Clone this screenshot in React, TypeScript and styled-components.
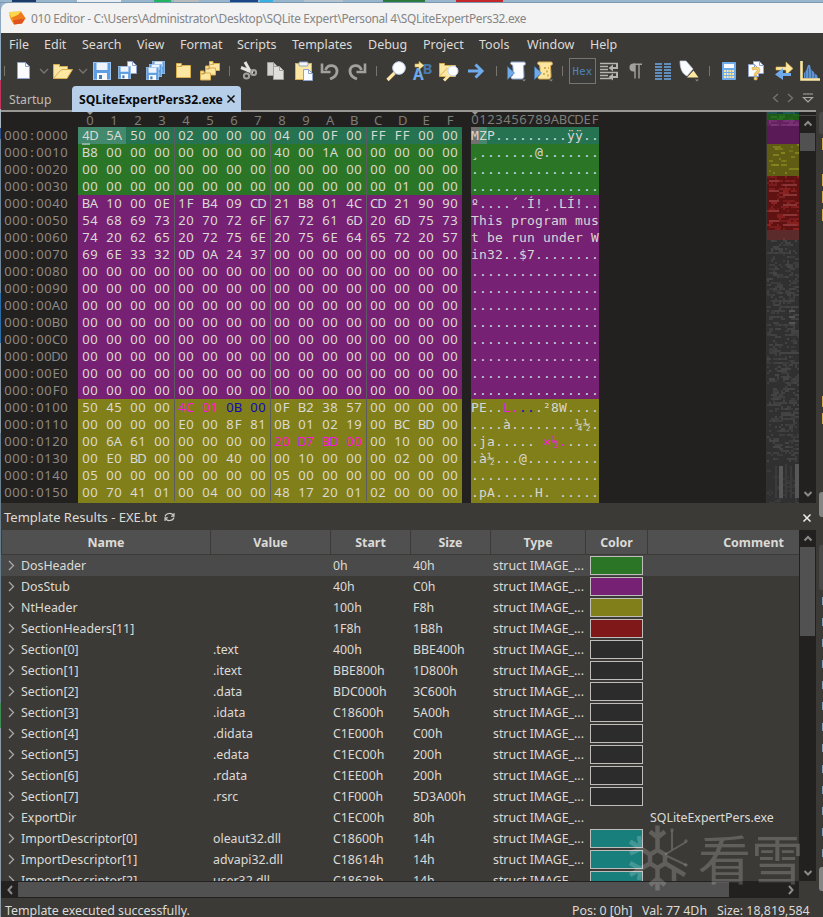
import React from "react";
import styled, { createGlobalStyle } from "styled-components";

const UI = '"Noto Sans", "Noto Sans CJK SC", sans-serif';

const Global = createGlobalStyle`
  * { box-sizing: border-box; }
  body { margin: 0; overflow: hidden; background: #3c3a36; font-family: ${UI}; font-size: 12.5px; color: #dcdad6; }
`;

const Screen = styled.div`
  position: relative; width: 823px; height: 917px; overflow: hidden;
  display: flex; flex-direction: column; background: #3c3a36;
`;
const Desktop = styled.div`
  display: flex; height: 3px; flex: none; background: #97b5cc; border-bottom: 1px solid #7d99ad;
`;
const Blob = styled.i<{ $gap: number; $w: number; $c: string }>`
  height: 2px; margin-left: ${(p) => p.$gap}px; width: ${(p) => p.$w}px; background: ${(p) => p.$c};
`;
const Row = styled.div`display: flex; flex: 1; min-height: 0;`;
const LeftEdge = styled.div`
  width: 1px; flex: none;
  background: linear-gradient(#8ea9bf 0 77px, #c0345c 77px 106px, #a9b6c0 106px 125px, #2d4f86 125px 136px, #6f8799 136px 290px, #2a6da8 290px 340px, #8b9aa5 340px 430px, #68808f 430px 700px, #3f8e50 700px 725px, #8d9aa3 725px);
`;
const Window = styled.div`
  flex: 1; min-width: 0; display: flex; flex-direction: column;
`;
const TitleWrap = styled.div`height: 30px; flex: none; background: #97b5cc;`;
const TitleBar = styled.div`
  display: flex; align-items: center; height: 30px; padding-left: 8px; gap: 5px;
  background: #f3f3f3; border-top-left-radius: 7px; color: #858585; white-space: pre;
  span { font-size: 11.9px; letter-spacing: -0.34px; }
`;
const MenuBar = styled.div`display: flex; align-items: center; height: 24px; flex: none; padding: 0 0 1px 8px;`;
const MenuItem = styled.span<{ $w: number }>`width: ${(p) => p.$w}px; flex: none; white-space: nowrap; color: #dddbd8;`;
const ToolBar = styled.div`display: flex; align-items: center; height: 28px; flex: none;`;
const Slot = styled.div<{ $w: number }>`
  width: ${(p) => p.$w}px; height: 28px; flex: none; display: flex; align-items: center; justify-content: center;
`;
const Sep = styled.i`width: 1px; height: 10px; background: #77756f;`;
const HexToggle = styled.div`
  width: 27px; height: 26px; border: 1px solid #77756f; background: #3a3a38; color: #4f86bd; flex: none;
  font: 10.5px/25px "DejaVu Sans Mono", monospace; text-align: center; letter-spacing: 0.3px;
`;
const TabBar = styled.div`
  display: flex; align-items: stretch; height: 27px; flex: none; width: 815px;
  padding-top: 1px; background: linear-gradient(#999794, #999794) 0 100% / 100% 2px no-repeat;
`;
const Tab = styled.div<{ $active?: boolean }>`
  display: flex; align-items: center; height: 26px; padding-left: ${(p) => (p.$active ? 7 : 8)}px;
  width: ${(p) => (p.$active ? 169 : 71)}px; gap: 4px; white-space: nowrap; font-size: 12.2px;
  color: ${(p) => (p.$active ? "#0a0a0a" : "#bfbdb9")};
  background: ${(p) => (p.$active ? "#b7cfe9" : "transparent")};
  border-radius: 4px 4px 0 0; font-weight: ${(p) => (p.$active ? 700 : 400)};
`;
const TabNav = styled.div`display: flex; align-items: center; margin-left: auto; gap: 8px; padding: 0 2px 2px 0;`;
const Body = styled.div`display: flex; flex: 1; min-height: 0;`;
const Main = styled.div`width: 815px; flex: none; display: flex; flex-direction: column;`;

const HexView = styled.div`display: flex; height: 391px; flex: none; background: #222120; overflow: hidden;`;
const Offsets = styled.div`width: 77px; flex: none; padding: 15px 0 0 3px; color: #8b8985;`;
const Line = styled.div<{ $bg?: string }>`
  display: flex; height: 17px; background: ${(p) => p.$bg || "transparent"};
`;
const Ruler = styled.div<{ $pad: number }>`
  display: flex; position: relative; height: 15px; color: #7f7d78; padding-left: ${(p) => p.$pad}px;
  &::before {
    content: ""; position: absolute; top: 0; left: ${(p) => (p.$pad ? 9 : 1)}px;
    border: 3px solid transparent; border-top-color: #999794; border-bottom: 0;
  }
`;
const RulerByte = styled.span`width: 8px; margin-right: 16px; flex: none; text-align: center; font-size: 13px; line-height: 16px;`;
const Ch = styled.span<{ $c?: string; $bg?: string; $mono?: boolean }>`
  width: 8px; height: 100%; flex: none; display: flex; justify-content: center; align-items: center;
  font-family: ${(p) => (p.$mono ? '"DejaVu Sans Mono", monospace' : UI)};
  font-size: 13px; line-height: 17px; white-space: pre; color: ${(p) => p.$c || "inherit"};
  background: ${(p) => p.$bg || "transparent"};
`;
const Byte = styled.span<{ $c?: string; $bg?: string; $sep?: boolean }>`
  width: 24px; height: 100%; padding-left: ${(p) => (p.$sep ? 3 : 4)}px; display: flex; flex: none;
  color: ${(p) => p.$c || "#dbd9d5"}; background: ${(p) => p.$bg || "transparent"};
  border-left: ${(p) => (p.$sep ? "1px solid #5b5b60" : "0")};
`;
const Caret = styled.i`
  position: absolute; left: 82px; top: 143px; width: 8px; height: 2px; background: #8fb09d;
`;
const Cols = styled.div`width: 384px; flex: none;`;
const Ascii = styled.div`width: 128px; margin-left: 9px; flex: none; color: #d8d6d2;`;
const Map = styled.div`margin-left: auto; width: 33px; border-left: 1px solid #33322f; background: #303030;`;
const VScroll = styled.div`
  width: 17px; flex: none; display: flex; flex-direction: column; align-items: center; background: #222120; padding-right: 1px; padding-left: 1px;
`;
const HexScroll = styled(VScroll)`padding-top: 3px; box-shadow: inset 0 3px #222120, inset 0 4px #4a4946;`;
const ArrowBox = styled.div<{ $h: number }>`height: ${(p) => p.$h}px; display: flex; align-items: center; justify-content: center;`;
const Thumb = styled.div<{ $h: number }>`width: 15px; height: ${(p) => p.$h}px; background: #515151;`;
const Spacer = styled.div`flex: 1;`;

const PanelTitle = styled.div`
  display: flex; align-items: center; height: 27px; flex: none; padding: 0 4px 0 3px; gap: 7px; font-size: 13px;
`;
const CloseButton = styled.span`margin-left: auto; padding: 2px 1px 0 0; display: flex;`;
const TableArea = styled.div`display: flex; height: 351px; flex: none;`;
const Table = styled.div`width: 798px; flex: none; overflow: hidden;`;
const HeadRow = styled.div`display: flex; height: 25px; padding-left: 1px; border-bottom: 1px solid #3c3a36; width: 798px; overflow: hidden;`;
const HeadCell = styled.div<{ $w: number }>`
  width: ${(p) => p.$w}px; flex: none; height: 24px; line-height: 26px; text-align: center; font-weight: 700;
  background: #505050; border-right: 1px solid #3c3a36; font-size: 12.4px;
`;
const DataRow = styled.div<{ $on?: boolean }>`
  display: flex; align-items: center; height: 21px; background: ${(p) => (p.$on ? "#4a4a4a" : "transparent")};
`;
const Cell = styled.div<{ $w: number }>`width: ${(p) => p.$w}px; flex: none; white-space: pre; line-height: 21px; font-size: 12.35px;`;
const Expander = styled.div`width: 20px; padding-left: 7px; flex: none;`;
const Swatch = styled.div<{ $c?: string }>`
  width: 53px; height: 19px; margin: 0 7px 0 0; flex: none;
  border: ${(p) => (p.$c ? "1px solid #bfbdbb" : "0")}; background: ${(p) => p.$c || "transparent"};
`;
const HScroll = styled.div`
  display: flex; align-items: center; height: 17px; flex: none; width: 798px; background: #222120;
`;
const HThumb = styled.div`width: 711px; height: 15px; background: #515151;`;
const StatusBar = styled.div`
  display: flex; align-items: center; height: 19px; flex: none; padding: 6px 0 0 4px; white-space: pre; font-size: 12.4px;
`;
const StatusItem = styled.span<{ $w?: number }>`width: ${(p) => (p.$w ? p.$w + "px" : "auto")}; flex: none;`;

const Side = styled.div`width: 7px; flex: none; padding-left: 3px; overflow: hidden;`;
const SideBit = styled.div<{ $gap: number; $h: number; $c: string; $in?: number }>`
  margin-top: ${(p) => p.$gap}px; height: ${(p) => p.$h}px; background: ${(p) => p.$c};
  margin-left: ${(p) => p.$in || 0}px; border-radius: ${(p) => (p.$in ? 0 : "3px 0 0 3px")};
`;
const Watermark = styled.div`
  position: absolute; left: 626px; top: 824px; display: flex; color: rgba(255, 255, 255, 0.19); pointer-events: none;
  font: 400 53px/66px "Noto Sans CJK SC", sans-serif; white-space: nowrap;
`;
const WatermarkText = styled.span`margin: 0 0 0 8px;`;

/* ---------- icons ---------- */
const Y = "#fbe6a2";
const YD = "#d9ae4e";
const B = "#6fabea";
const P = "#fbfcff";
const PE = "#8ea4cf";
const G = "#a3a19d";

const Icon = styled.svg`display: block; flex: none; overflow: visible;`;
const Svg = ({ w = 20, h = 20, children }: { w?: number; h?: number; children: React.ReactNode }) => (
  <Icon width={w} height={h} viewBox={`0 0 ${w} ${h}`} fill="none">{children}</Icon>
);
const Disk = ({ x, y, s }: { x: number; y: number; s: number }) => (
  <g transform={`translate(${x} ${y}) scale(${s / 18})`}>
    <rect x=".5" y=".5" width="17" height="17" fill="#5e9ee2" stroke="#9cc4ee" />
    <rect x="3.5" y="1" width="11" height="7" fill="#eef3fc" />
    <rect x="4" y="11" width="10" height="7" fill="#f7f8fb" />
    <rect x="6" y="13" width="3" height="4" fill="#4b79b8" />
  </g>
);
const Page = ({ x, y, w, h, f = P, e = PE }: { x: number; y: number; w: number; h: number; f?: string; e?: string }) => (
  <g>
    <path d={`M${x} ${y}h${w - 4}l4 4v${h - 4}h-${w}z`} fill={f} stroke={e} />
    <path d={`M${x + w - 4} ${y}v4h4`} stroke={e} />
  </g>
);
const Fold = ({ x, y, w, h }: { x: number; y: number; w: number; h: number }) => (
  <path d={`M${x} ${y}h${w * 0.35}v2h${w * 0.65}v${h - 2}h-${w}zM${x} ${y + 3}h${w * 0.35}l1.500-1`} fill={Y} stroke={YD} />
);
const Chevron = () => <Svg w={10} h={8}><path d="M1 2l4 4 4-4" stroke="#77756f" strokeWidth="1.400" /></Svg>;
const Drop = () => <path d="M15 18.500h4l-2 2z" fill="#8a8883" />;
const Scroll = ({ f, e }: { f: string; e: string }) => (
  <path d="M4.500 1h12.500c2 0 2 3.500-.5 3.500l.5 10.500c0 2-1 3-2.500 3H5.500c-2 0-2-3 0-3.500C6.500 10 6 6 5.500 4 3.500 4 3 1.500 4.500 1z" fill={f} stroke={e} />
);
const Play = () => <path d="M.5 5.500l7 6.500-7 6.500z" fill={B} stroke="#3d75b5" strokeWidth=".6" />;

const tools: [number, React.ReactNode][] = [
  [7, <Sep />],
  [30, <Svg><Page x={4.5} y={1.5} w={12} h={16} /></Svg>],
  [12, <Chevron />],
  [25, <Svg><path d="M.5 17.500V3.500h6v2h8v3.500" fill={Y} stroke={YD} /><path d="M.5 17.500L6 11l3-2.500h10.500L14 17.500z" fill={Y} stroke={YD} /></Svg>],
  [16, <Chevron />],
  [22, <Svg><Disk x={1} y={1} s={18} /></Svg>],
  [30, <Svg><Page x={9.5} y={.5} w={9} h={12} /><Disk x={0} y={5} s={13} /></Svg>],
  [24, <Svg><Disk x={7} y={0} s={13} /><Disk x={4} y={3} s={13} /><Disk x={1} y={6} s={13} /></Svg>],
  [32, <Svg><Fold x={3.5} y={2.5} w={14} h={14} /></Svg>],
  [22, <Svg><Fold x={9.5} y={.5} w={10} h={9} /><Fold x={5.5} y={5} w={10} h={9} /><Fold x={.5} y={10} w={10} h={9} /></Svg>],
  [16, <Sep />],
  [23, <Svg><path d="M6 1l5.500 10M2 6.500l12 5" stroke="#e5e3e0" strokeWidth="3" /><circle cx="14.500" cy="11.500" r="2.600" stroke={G} strokeWidth="2" /><circle cx="7.500" cy="15" r="2.600" stroke={G} strokeWidth="2" /></Svg>],
  [31, <Svg><Page x={1.5} y={1.5} w={10} h={13} f="#d5d3d0" e="#a19f9c" /><Page x={7.5} y={5.5} w={10} h={13} f="#e1dfdc" e="#a19f9c" /></Svg>],
  [25, <Svg><rect x="1.500" y="2.500" width="16" height="16" fill={Y} stroke={YD} /><rect x="5" y="1" width="9" height="4" rx="1" fill="#f6f6f6" stroke={PE} /><Page x={9.5} y={8.5} w={9} h={11} /></Svg>],
  [28, <Svg><path d="M5.500 9C8 2.500 17 3.500 17 10.500c0 3.500-3 6-7 7.500" stroke={G} strokeWidth="2.800" /><path d="M2 2.500v8.500h8.500" stroke={G} strokeWidth="2.600" /></Svg>],
  [26, <Svg><path d="M14.500 9C12 2.500 3 3.500 3 10.500c0 3.500 3 6 7 7.500" stroke={G} strokeWidth="2.800" /><path d="M18 2.500v8.500H9.500" stroke={G} strokeWidth="2.600" /></Svg>],
  [12, <Sep />],
  [28, <Svg><path d="M1.500 19l7-7" stroke={Y} strokeWidth="3.200" /><circle cx="13" cy="7" r="6.300" fill="#fbfdff" stroke="#c5d6ef" /></Svg>],
  [26, <Svg><text x="0" y="19" fill={B} fontFamily="Noto Sans" fontWeight="700" fontSize="15.500">A</text><text x="9.500" y="13" fill="#4878ab" fontFamily="Noto Sans" fontWeight="700" fontSize="15">B</text><path d="M2 3h4V.5L11 4.500l-5 4V6H2z" fill={Y} stroke={YD} strokeWidth=".6" /></Svg>],
  [26, <Svg><path d="M.5 15.500V2.500h5v2h11v11z" fill={Y} stroke={YD} /><path d="M.5 15l8-8" stroke={YD} /><path d="M5 19.500l6-6" stroke={Y} strokeWidth="3" /><circle cx="14" cy="10" r="5" fill="#fbfdff" stroke="#c5d6ef" /></Svg>],
  [28, <Svg><path d="M2 10h14M9.500 3.500L16 10l-6.500 6.500" stroke={B} strokeWidth="3" /></Svg>],
  [13, <Sep />],
  [28, <Svg><Scroll f={P} e={PE} /><Play /><Drop /></Svg>],
  [26, <Svg><Scroll f={Y} e={YD} /><path d="M10 7h2M14 7h1M12 10.500h2M9 13h2M13 14.500h2" stroke={YD} strokeWidth="2" /><Play /><Drop /></Svg>],
  [10, <Sep />],
  [31, <HexToggle>Hex</HexToggle>],
  [22, <Svg><path d="M1 2.500h18M1 5.500h8M1 8.500h8M1 11.500h18M1 14.500h8M1 17.500h11" stroke="#b5b3af" strokeWidth="1.500" /><path d="M18 3v4h-6M18 12v4h-6" stroke="#b5b3af" strokeWidth="2" /><path d="M14 3.500v7L9.500 7zM14 12.500v7L9.500 16z" fill="#b5b3af" /></Svg>],
  [30, <Svg><path d="M10 2.500H8.500a4 4 0 0 0 0 8H10z" fill={G} /><path d="M10 3v14.500M14 3v14.500M8.500 3.200H17" stroke={G} strokeWidth="1.400" /></Svg>],
  [26, <Svg><path d="M2 3h7M2 6h7M2 9h7M2 12h7M2 15h7M2 18h7M11 3h7M11 6h7M11 9h7M11 12h7M11 15h7M11 18h7" stroke={B} strokeWidth="1.700" /></Svg>],
  [26, <Svg><path d="M1 0h6l7 8-6 7C4 13 1 9 1 0z" fill={P} stroke="#c5d0e2" strokeWidth=".7" /><path d="M14.500 9.500l5 7H8z" fill={Y} /><path d="M16 18.500h4l-2 2z" fill="#8a8883" /></Svg>],
  [15, <Sep />],
  [23, <Svg><rect x="3" y="1" width="14" height="18" rx="1" fill={B} /><rect x="5" y="3" width="10" height="4" fill={P} /><path d="M5 10h10M5 13h10M5 16h10" stroke={Y} strokeWidth="2" strokeDasharray="2 .7" /></Svg>],
  [32, <Svg><Page x={7.5} y={.5} w={10} h={12} /><Page x={2.5} y={3.5} w={10} h={12} /><text x="6" y="19" fill="#f5d77d" stroke={YD} strokeWidth=".7" fontFamily="Noto Sans" fontWeight="700" fontSize="17">?</text></Svg>],
  [23, <Svg><path d="M2 6h10V1l7 6.500-7 6.500V9H2z" fill={Y} stroke={YD} strokeWidth=".6" /><path d="M17 12H9V7l-8 6.500L9 19v-4h8z" fill={B} /></Svg>],
  [29, <Svg><path d="M4 17V12l2-2 2-6 2 0 1 5 2 1 2 3 2 1 1 4z" fill="#5e93cf" /><path d="M5.500 17v-6M8.500 17V7M11.500 17V8M14.500 17v-5" stroke="#3c5f8a" strokeWidth=".7" /><path d="M1.500 0v18.500H20" stroke={Y} strokeWidth="2.600" /></Svg>],
];

const Arrow = ({ d, c = "#8d8b87" }: { d: "up" | "down" | "left" | "right"; c?: string }) => {
  const paths = { up: "M1.500 6.500L5 3l3.500 3.500", down: "M1.500 3L5 6.500 8.500 3", left: "M7 1L3.500 5 7 9", right: "M3 1l3.500 4L3 9" };
  return <Svg w={10} h={10}><path d={paths[d]} stroke={c} strokeWidth="2" /></Svg>;
};

/* ---------- data ---------- */
const menus: [string, number][] = [
  ["File", 35], ["Edit", 38], ["Search", 55], ["View", 43], ["Format", 57], ["Scripts", 55],
  ["Templates", 76], ["Debug", 55], ["Project", 56], ["Tools", 48], ["Window", 63], ["Help", 40],
];
const Z16 = Array(16).fill("00").join(" ");
const D16 = ".".repeat(16);
const special: Record<number, [string, string]> = {
  0: ["4D 5A 50 00 02 00 00 00 04 00 0F 00 FF FF 00 00", "MZP.........ÿÿ.."],
  1: ["B8 00 00 00 00 00 00 00 40 00 1A 00 00 00 00 00", "¸.......@......."],
  3: ["00 00 00 00 00 00 00 00 00 00 00 00 00 01 00 00", D16],
  4: ["BA 10 00 0E 1F B4 09 CD 21 B8 01 4C CD 21 90 90", "º....´.Í!¸.LÍ!.."],
  5: ["54 68 69 73 20 70 72 6F 67 72 61 6D 20 6D 75 73", "This program mus"],
  6: ["74 20 62 65 20 72 75 6E 20 75 6E 64 65 72 20 57", "t be run under W"],
  7: ["69 6E 33 32 0D 0A 24 37 00 00 00 00 00 00 00 00", "in32..$7........"],
  16: ["50 45 00 00 4C 01 0B 00 0F B2 38 57 00 00 00 00", "PE..L....²8W...."],
  17: ["00 00 00 00 E0 00 8F 81 0B 01 02 19 00 BC BD 00", "....à........¼½."],
  18: ["00 6A 61 00 00 00 00 00 20 D7 BD 00 00 10 00 00", ".ja..... ×½....."],
  19: ["00 E0 BD 00 00 00 40 00 00 10 00 00 00 02 00 00", ".à½...@........."],
  20: ["05 00 00 00 00 00 00 00 05 00 00 00 00 00 00 00", D16],
  21: ["00 70 41 01 00 04 00 00 48 17 20 01 02 00 00 00", ".pA.....H. ....."],
};
const lines = Array.from({ length: 22 }, (_, i) => {
  const [hex, text] = special[i] || [Z16, D16];
  return { off: "000:0" + i.toString(16).toUpperCase().padStart(2, "0") + "0", bytes: hex.split(" "), text };
});
const GREEN = "#2a7626", PURPLE = "#762174", OLIVE = "#807f19", RED = "#7f1919", TEAL = "#197f7c", NONE = "#2c2c2c";
const bgOf = (i: number) => (i === 0 ? "#257351" : i < 4 ? GREEN : i < 16 ? PURPLE : OLIVE);
const inkOf = (r: number, c: number) => {
  if (r === 16 && (c === 4 || c === 5)) return "#ff12e4";
  if (r === 16 && (c === 6 || c === 7)) return "#1008c0";
  if (r === 18 && c >= 8 && c <= 11) return "#ff12e4";
  return undefined;
};
const HEX = "0123456789ABCDEF".split("");

type Rec = [string, string, string, string, string?, string?];
const records: Rec[] = [
  ["DosHeader", "", "0h", "40h", GREEN],
  ["DosStub", "", "40h", "C0h", PURPLE],
  ["NtHeader", "", "100h", "F8h", OLIVE],
  ["SectionHeaders[11]", "", "1F8h", "1B8h", RED],
  ["Section[0]", ".text", "400h", "BBE400h", NONE],
  ["Section[1]", ".itext", "BBE800h", "1D800h", NONE],
  ["Section[2]", ".data", "BDC000h", "3C600h", NONE],
  ["Section[3]", ".idata", "C18600h", "5A00h", NONE],
  ["Section[4]", ".didata", "C1E000h", "C00h", NONE],
  ["Section[5]", ".edata", "C1EC00h", "200h", NONE],
  ["Section[6]", ".rdata", "C1EE00h", "200h", NONE],
  ["Section[7]", ".rsrc", "C1F000h", "5D3A00h", NONE],
  ["ExportDir", "", "C1EC00h", "80h", undefined, "SQLiteExpertPers.exe"],
  ["ImportDescriptor[0]", "oleaut32.dll", "C18600h", "14h", TEAL],
  ["ImportDescriptor[1]", "advapi32.dll", "C18614h", "14h", TEAL],
  ["ImportDescriptor[2]", "user32.dll", "C18628h", "14h", TEAL],
];
const heads: [string, number][] = [["Name", 209], ["Value", 120], ["Start", 80], ["Size", 80], ["Type", 95], ["Color", 62], ["Comment", 212]];

/* Byte-density strip: coloured bands with a deterministic speckle. */
const bands: [number, number, string, string, number][] = [
  [0, 2, "#173f3f", "#22605c", 0.3], [2, 8, "#1e5a19", "#26701f", 0.08], [8, 14, "#64225f", "#7c3578", 0.5],
  [14, 32, "#5a1a58", "#5a1a58", 0], [32, 64, "#5f5d14", "#88861f", 0.16], [64, 118, "#601212", "#8c2222", 0.3],
  [118, 128, "#5a2b2a", "#7c3c3b", 0.06], [128, 350, "#303030", "#454545", 0.42], [350, 391, "#303030", "#3d3d3d", 0.2],
];
const MiniMap = () => {
  let seed = 77;
  const rnd = () => ((seed = (seed * 16807) % 2147483647) / 2147483647);
  const out: React.ReactNode[] = [];
  bands.forEach(([a, b, base, dot, p], k) => {
    out.push(<rect key={"b" + k} x="0" y={a} width="32" height={b - a} fill={base} />);
    for (let y = a; y < b; y += 2)
      for (let x = 0; x < 32; x += 2)
        if (rnd() < p * 0.6) {
          const w = Math.min(32 - x, 2 + 2 * Math.floor(rnd() * rnd() * 6));
          out.push(<rect key={`${x}-${y}`} x={x} y={y} width={w} height="2" fill={dot} opacity={0.5 + rnd() * 0.5} />);
        }
  });
  return (
    <svg width="32" height="391" viewBox="0 0 32 391" shapeRendering="crispEdges" display="block">
      {out}
      {[69, 79, 89, 99, 109].map((y) => <path key={y} d={`M2 ${y}h10M16 ${y + 4}h14`} stroke="#8a3436" strokeWidth="2" />)}
      <path d="M22 199h6M22 205h6M22 211h6" stroke="#555" strokeWidth="2" />
      <path d="M14 354v32M30 352v34" stroke="#575757" strokeWidth="4" />
      <path d="M9 354v32M19 354v32M24 354v32" stroke="#3b3b3b" strokeWidth="2" />
    </svg>
  );
};

const Snow = () => (
  <svg width="64" height="68" viewBox="0 0 64 68" fill="none" stroke="currentColor" strokeWidth="4.500">
    <path d="M31.500 1.500v24.500M31.500 44.500v22M24 7.500l7.500 6 7.500-6M24 61l7.500-6.500 7.500 6.500M39 30.500v9l-7.500 4.500-7.500-4.500v-9l7.500-4.500zM24 30.500L4 17.500M24 39.500L4 51M4 29.500l11-5L13 12M4 39l11 6-2 11M39.500 39.500L59 51M48 57V45" />
    <path d="M39 30.500l21-12.500M46 26V7M41 32l19 9" strokeWidth="2" />
    <circle cx="60" cy="17" r=".8" strokeWidth="2" /><circle cx="60" cy="41" r=".8" strokeWidth="2" /><circle cx="46" cy="6" r=".8" strokeWidth="2" />
  </svg>
);

export default function App() {
  return (
    <>
      <Global />
      <Screen>
        <Desktop>
          <Blob $gap={12} $w={24} $c="#1d3b69" /><Blob $gap={41} $w={44} $c="#e9eef5" /><Blob $gap={33} $w={17} $c="#23b463" />
          <Blob $gap={3} $w={25} $c="#b9bcbc" /><Blob $gap={31} $w={28} $c="#1b4689" /><Blob $gap={2} $w={13} $c="#35b1e6" />
          <Blob $gap={31} $w={39} $c="#b3c3cf" /><Blob $gap={40} $w={42} $c="#2b7a3d" /><Blob $gap={31} $w={47} $c="#c5282b" />
        </Desktop>
        <Row>
          <LeftEdge />
          <Window>
            <TitleWrap>
              <TitleBar>
                <svg width="17" height="14" viewBox="0 0 17 14">
                  <path d="M.5 1L12 .5l4.500 7L13 12.500 5 13.500C2 10 0 6 .5 1z" fill="#f59a1f" />
                  <path d="M.5 1L12 .5 9 4 2 7z" fill="#fbd84b" /><path d="M2 7l7-3 3-3 4.500 6.500-12 1z" fill="#ef7a1c" /><path d="M4 9l12-1.500-3 5-8 1z" fill="#e0521f" />
                </svg>
                <span>010 Editor - C:\Users\Administrator\Desktop\SQLite Expert\Personal 4\SQLiteExpertPers32.exe</span>
              </TitleBar>
            </TitleWrap>
            <MenuBar>{menus.map(([m, w]) => <MenuItem key={m} $w={w}>{m}</MenuItem>)}</MenuBar>
            <ToolBar>{tools.map(([w, n], i) => <Slot key={i} $w={w}>{n}</Slot>)}</ToolBar>
            <TabBar>
              <Tab>Startup</Tab>
              <Tab $active>SQLiteExpertPers32.exe<Svg w={8} h={8}><path d="M.5.5l7 7M7.500.5l-7 7" stroke="#111" strokeWidth="1.500" /></Svg></Tab>
              <TabNav>
                <Svg w={7} h={10}><path d="M6 1L1.500 5 6 9" stroke="#77756f" strokeWidth="1.300" /></Svg>
                <Svg w={7} h={10}><path d="M1 1l4.500 4L1 9" stroke="#77756f" strokeWidth="1.300" /></Svg>
                <Svg w={12} h={10}><path d="M1 1h10M1.500 4.500h9L6 9z" stroke="#aaa8a4" strokeWidth="1.200" /></Svg>
              </TabNav>
            </TabBar>
            <Body>
              <Main>
                <HexView>
                  <Offsets>{lines.map((l) => <Line key={l.off}>{l.off.split("").map((c, i) => <Ch key={i}>{c}</Ch>)}</Line>)}</Offsets>
                  <Cols>
                    <Ruler $pad={8}>{HEX.map((h) => <RulerByte key={h}>{h}</RulerByte>)}</Ruler>
                    {lines.map((l, r) => (
                      <Line key={r} $bg={bgOf(r)}>
                        {l.bytes.map((b, c) => (
                          <Byte key={c} $sep={c > 0 && c % 4 === 0} $c={inkOf(r, c)} $bg={r === 0 && c < 2 ? "#43896d" : undefined}>
                            <Ch>{b[0]}</Ch><Ch>{b[1]}</Ch>
                          </Byte>
                        ))}
                      </Line>
                    ))}
                    <Line $bg={OLIVE} />
                  </Cols>
                  <Ascii>
                    <Ruler $pad={0}>{HEX.map((h) => <Ch key={h}>{h}</Ch>)}</Ruler>
                    {lines.map((l, r) => (
                      <Line key={r} $bg={bgOf(r)}>
                        {l.text.split("").map((t, c) => (
                          <Ch key={c} $mono $c={inkOf(r, c)} $bg={r === 0 ? ["#737070", "#43896d"][c] : undefined}>{t}</Ch>
                        ))}
                      </Line>
                    ))}
                    <Line $bg={OLIVE} />
                  </Ascii>
                  <Map><MiniMap /></Map>
                  <HexScroll>
                    <ArrowBox $h={18}><Arrow d="up" /></ArrowBox><Thumb $h={18} /><Spacer /><ArrowBox $h={18}><Arrow d="down" /></ArrowBox>
                  </HexScroll>
                </HexView>
                <PanelTitle>
                  Template Results - EXE.bt
                  <Svg w={11} h={10}><path d="M1 4.500C2 1 8 0 9.500 4M10 5.500C9 9 3 10 1.500 6M10 1v3.200H7M1 9V5.800h3" stroke="#d0cecb" strokeWidth="1.100" /></Svg>
                  <CloseButton><Svg w={8} h={8}><path d="M.5.5l7 7M7.500.5l-7 7" stroke="#f0efed" strokeWidth="1.500" /></Svg></CloseButton>
                </PanelTitle>
                <TableArea>
                  <Table>
                    <HeadRow>{heads.map(([h, w]) => <HeadCell key={h} $w={w}>{h}</HeadCell>)}</HeadRow>
                    {records.map(([name, value, start, size, color, comment], i) => (
                      <DataRow key={name} $on={i === 0}>
                        <Expander><Svg w={7} h={11}><path d="M1 1l4.500 4.500L1 10" stroke="#aaa8a4" strokeWidth="1.300" /></Svg></Expander>
                        <Cell $w={192}>{name}</Cell><Cell $w={120}>{value}</Cell><Cell $w={80}>{start}</Cell><Cell $w={80}>{size}</Cell>
                        <Cell $w={97}>struct IMAGE_...</Cell>
                        <Swatch $c={color} />
                        <Cell $w={140}>{comment}</Cell>
                      </DataRow>
                    ))}
                  </Table>
                  <VScroll>
                    <ArrowBox $h={17}><Arrow d="up" /></ArrowBox><Thumb $h={89} /><Spacer /><ArrowBox $h={16}><Arrow d="down" /></ArrowBox>
                  </VScroll>
                </TableArea>
                <HScroll>
                  <Slot $w={17}><Arrow d="left" /></Slot><HThumb /><Spacer /><Slot $w={17}><Arrow d="right" /></Slot>
                </HScroll>
                <StatusBar>
                  <StatusItem>Template executed successfully.</StatusItem><Spacer />
                  <StatusItem $w={70}>Pos: 0 [0h]</StatusItem><StatusItem $w={75}>Val: 77 4Dh</StatusItem><StatusItem $w={99}>Size: 18,819,584</StatusItem>
                </StatusBar>
              </Main>
              <Side>
                <SideBit $gap={0} $h={22} $c="#4a4a4a" />
                {[4, 24, 5, 6].map((g, i) => <SideBit key={i} $gap={g} $h={12} $c="#d9ae4e" $in={3} />)}
                <SideBit $gap={175} $h={11} $c="#d9ae4e" $in={3} /><SideBit $gap={6} $h={11} $c="#d9ae4e" $in={3} />
                <SideBit $gap={68} $h={25} $c="#858585" /><SideBit $gap={28} $h={45} $c="#4a4a4a" />
                {Array.from({ length: 13 }, (_, i) => <SideBit key={i} $gap={i ? 13 : 7} $h={8} $c="#7f9fba" $in={3} />)}
                <SideBit $gap={10} $h={24} $c="#858585" />
              </Side>
            </Body>
          </Window>
        </Row>
        <Caret />
        <Watermark><Snow /><WatermarkText>看雪</WatermarkText></Watermark>
      </Screen>
    </>
  );
}
